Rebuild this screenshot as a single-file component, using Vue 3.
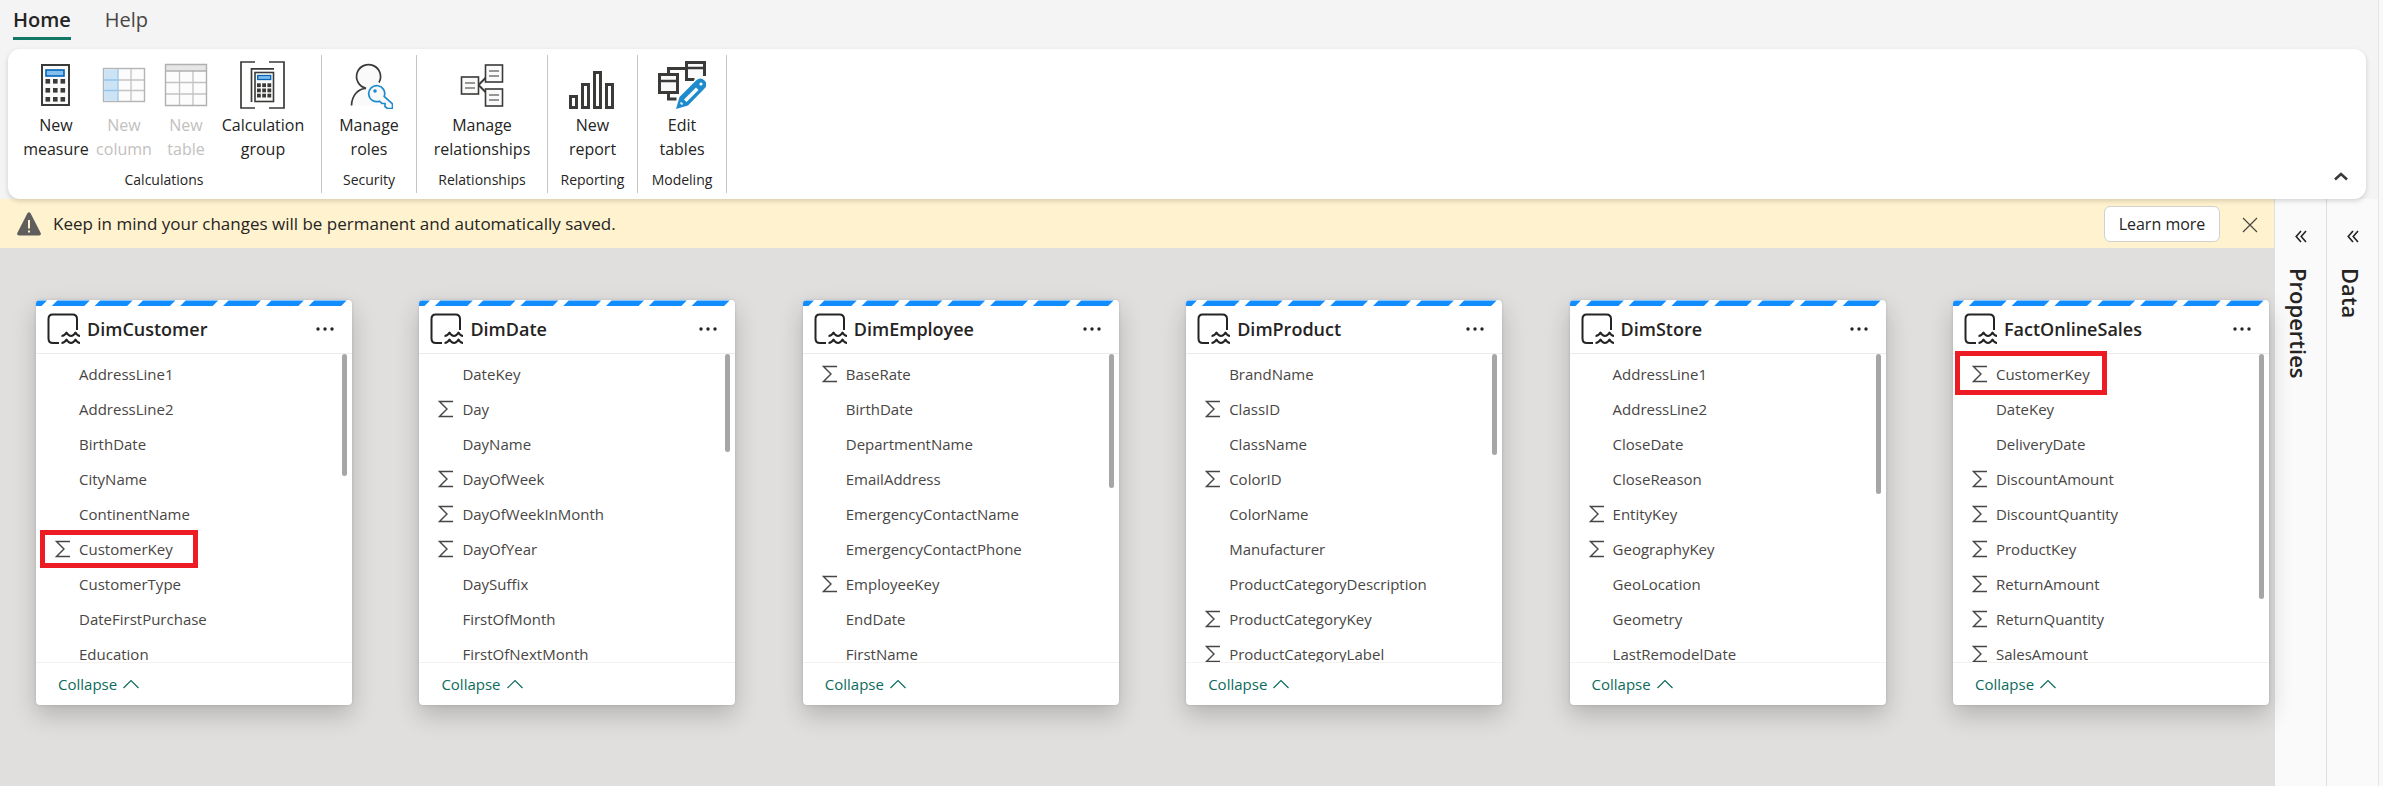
<script setup>
const groups = [
  {
    name: 'Calculations',
    kind: 'calculations',
    actions: [
      { icon: 'measure', lines: ['New', 'measure'] },
      { icon: 'column', lines: ['New', 'column'], disabled: true },
      { icon: 'table', lines: ['New', 'table'], disabled: true },
      { icon: 'calcgroup', lines: ['Calculation', 'group'] },
    ],
  },
  { name: 'Security', kind: 'security', actions: [{ icon: 'roles', lines: ['Manage', 'roles'] }] },
  { name: 'Relationships', kind: 'relationships', actions: [{ icon: 'relations', lines: ['Manage', 'relationships'] }] },
  { name: 'Reporting', kind: 'reporting', actions: [{ icon: 'report', lines: ['New', 'report'] }] },
  { name: 'Modeling', kind: 'modeling', actions: [{ icon: 'edit', lines: ['Edit', 'tables'] }] },
]

// A leading "+" marks a field that is summarised.
const f = (text) =>
  text.split(' ').map((t) => ({ name: t.replace('+', ''), sum: t.startsWith('+') }))

const tables = [
  {
    name: 'DimCustomer',
    thumb: 122,
    mark: 'mark-sixth',
    fields: f('AddressLine1 AddressLine2 BirthDate CityName ContinentName +CustomerKey CustomerType DateFirstPurchase Education'),
  },
  {
    name: 'DimDate',
    thumb: 98,
    fields: f('DateKey +Day DayName +DayOfWeek +DayOfWeekInMonth +DayOfYear DaySuffix FirstOfMonth FirstOfNextMonth'),
  },
  {
    name: 'DimEmployee',
    thumb: 134,
    fields: f('+BaseRate BirthDate DepartmentName EmailAddress EmergencyContactName EmergencyContactPhone +EmployeeKey EndDate FirstName'),
  },
  {
    name: 'DimProduct',
    thumb: 101,
    fields: f('BrandName +ClassID ClassName +ColorID ColorName Manufacturer ProductCategoryDescription +ProductCategoryKey +ProductCategoryLabel'),
  },
  {
    name: 'DimStore',
    thumb: 140,
    fields: f('AddressLine1 AddressLine2 CloseDate CloseReason +EntityKey +GeographyKey GeoLocation Geometry LastRemodelDate'),
  },
  {
    name: 'FactOnlineSales',
    thumb: 245,
    mark: 'mark-first',
    fields: f('+CustomerKey DateKey DeliveryDate +DiscountAmount +DiscountQuantity +ProductKey +ReturnAmount +ReturnQuantity +SalesAmount'),
  },
]

const panes = ['Properties', 'Data']
const keypad = [0, 1, 2]

// Slanted dashes along the top edge of a card; the first is cut by the edge.
const dashes = Array.from({ length: 8 }, (_, i) => {
  const x = -21.5 + i * 42.8
  return `${x},.5 ${x + 32.5},.5 ${x + 27},6 ${x - 5.5},6`
})
</script>

<template>
  <div class="app">
    <nav class="tabs">
      <button type="button" class="tab active">Home</button>
      <button type="button" class="tab">Help</button>
    </nav>

    <header class="ribbon">
      <section v-for="g in groups" :key="g.name" class="group" :class="g.kind">
        <div class="actions">
          <button v-for="a in g.actions" :key="a.icon" type="button" class="action" :class="a.icon" :disabled="a.disabled">
            <svg v-if="a.icon === 'measure'" class="icon" viewBox="0 0 48 48">
              <rect x="10" y="4" width="27" height="40" fill="#fafafa" stroke="#3a3a38" stroke-width="2" />
              <rect x="14" y="9" width="18" height="6" fill="#83beec" stroke="#0364b8" stroke-width="1.6" />
              <template v-for="r in keypad" :key="r">
                <rect v-for="c in keypad" :key="c" :x="13.5 + c * 7.5" :y="18 + r * 9" width="4.6" height="4.6" fill="#3a3a38" />
              </template>
            </svg>
            <svg v-else-if="a.icon === 'column'" class="icon" viewBox="0 0 48 48">
              <rect x="3.5" y="7.5" width="41" height="33" fill="#fcfcfc" stroke="#b4b4b4" stroke-width="1.4" />
              <rect x="4.2" y="8.2" width="13.5" height="31.6" fill="#cce3f6" />
              <path d="M31 8v32M18 19H44M18 29.5H44" stroke="#c2c2c2" stroke-width="1.3" />
              <path d="M18 8v32M4 19H18M4 29.5H18" stroke="#95c5e9" stroke-width="1.3" />
            </svg>
            <svg v-else-if="a.icon === 'table'" class="icon" viewBox="0 0 48 48">
              <rect x="3.5" y="3.5" width="41" height="41" fill="#fcfcfc" />
              <rect x="3.5" y="3.5" width="41" height="6.5" fill="#e6e6e6" />
              <path d="M17.5 10v34M31 10v34M4 21.5H44M4 33H44" stroke="#c2c2c2" stroke-width="1.3" />
              <path d="M3.5 3.5h41v41h-41zM3.5 10h41" fill="none" stroke="#b0b0b0" stroke-width="1.4" />
            </svg>
            <svg v-else-if="a.icon === 'calcgroup'" class="icon" viewBox="0 0 48 48">
              <path d="M16 1H2v46h14M30 1h15v46H30" fill="none" stroke="#3a3a38" stroke-width="1.7" />
              <path d="M12.5 41V7.8H35" fill="none" stroke="#3a3a38" stroke-width="1.7" />
              <rect x="16" y="11.5" width="18.5" height="29" fill="#fafafa" stroke="#3a3a38" stroke-width="1.6" />
              <rect x="18.7" y="14.5" width="13" height="4" fill="#83beec" stroke="#0364b8" stroke-width="1.3" />
              <template v-for="r in keypad" :key="r">
                <rect v-for="c in keypad" :key="c" :x="18 + c * 5.2" :y="22.3 + r * 5.2" width="3.8" height="3.8" fill="#3a3a38" />
              </template>
            </svg>
            <svg v-else-if="a.icon === 'roles'" class="icon" viewBox="0 0 48 48">
              <path d="M6.5 44.5C7 35 13 27.5 22 27.5l18 17z" fill="#fafafa" />
              <circle cx="24" cy="15.5" r="12" fill="#fafafa" />
              <path d="M34 21.5A12 12 0 1 0 21 27.3C13 27.5 6.8 34.5 6.5 44.5" fill="none" stroke="#3a3a38" stroke-width="1.7" />
              <path d="M39.2 35.5a8 8 0 1 0-4.8 4.7l2.6 2.3h3v3l2.5 2h5v-4.6z" fill="#fafafa" stroke="#1e8bcd" stroke-width="1.7" />
              <circle cx="30" cy="30" r="1.8" fill="#1e8bcd" />
            </svg>
            <svg v-else-if="a.icon === 'relations'" class="icon" viewBox="0 0 48 48">
              <path d="M20.5 24l8-8M20.5 24l8 8" stroke="#3a3a38" stroke-width="2" />
              <g fill="#fafafa" stroke="#3a3a38" stroke-width="1.6">
                <rect x="3.5" y="16" width="17" height="17" />
                <rect x="27.5" y="4" width="17" height="17" />
                <rect x="27.5" y="28" width="17" height="17" />
              </g>
              <path d="M7 22h10M7 27h10M31 10h10M31 15h10M31 34h10M31 39h10" stroke="#797774" stroke-width="1.3" />
            </svg>
            <svg v-else-if="a.icon === 'report'" class="icon" viewBox="0 0 48 48">
              <path d="M1.5 35.5h6v11h-6zM13.5 23.5h6v23h-6zM25.5 11.5h6v35h-6zM37.5 23.5h6v23h-6z" fill="#fff" stroke="#3a3a38" stroke-width="3" />
            </svg>
            <svg v-else class="icon" viewBox="0 0 48 48">
              <path d="M10.5 13V7.5H28M10.5 33v5h8" fill="none" stroke="#3a3a38" stroke-width="3" />
              <path d="M1.5 13.5h18v18h-18z" fill="#fafafa" stroke="#3a3a38" stroke-width="3" />
              <path d="M46.5 15V1.5h-18v17h8" fill="#fafafa" stroke="#3a3a38" stroke-width="3" />
              <path d="M1 20h19M28 7h19" stroke="#3a3a38" stroke-width="2.6" />
              <path d="M18 48l3.5-12L38 19.5q4.5-4 8.5 0t0 8L30 44.5z" fill="#1e8bcd" stroke="#fff" stroke-width="3" paint-order="stroke" />
              <path d="M26 38.5L38 26.5l2.5 2.5-12 12z" fill="#fafafa" />
              <circle cx="43" cy="23" r="1.6" fill="#fff" />
              <path d="M22.5 41.5l2 2" stroke="#cfe6f5" stroke-width="2" />
            </svg>
            <span v-for="l in a.lines" :key="l" class="line">{{ l }}</span>
          </button>
        </div>
        <div class="caption">{{ g.name }}</div>
      </section>
      <button type="button" class="fold" aria-label="Collapse ribbon">
        <svg width="14" height="9" viewBox="0 0 14 9"><path d="M1 7.5l6-5.5 6 5.5" fill="none" stroke="#3a3a38" stroke-width="2.6" /></svg>
      </button>
    </header>

    <div class="body">
      <main class="main">
        <div class="banner" role="status">
          <svg class="warn" width="24" height="24" viewBox="0 0 24 24">
            <path d="M10.3 1.5q1.7-2.5 3.4 0L23.7 21q.8 2.5-1.7 2.5H2Q-.5 23.5.3 21z" fill="#605e5c" />
            <path d="M12 8v8.5M12 18.5v2" stroke="#fff2ce" stroke-width="2" />
          </svg>
          <p class="message">Keep in mind your changes will be permanent and automatically saved.</p>
          <button type="button" class="learn">Learn more</button>
          <button type="button" class="close" aria-label="Close">
            <svg width="16" height="16" viewBox="0 0 16 16"><path d="M1 1l14 14M15 1L1 15" stroke="#484644" stroke-width="1.2" /></svg>
          </button>
        </div>

        <div class="canvas">
          <article v-for="t in tables" :key="t.name" class="card">
            <svg class="stripes" viewBox="0 0 316 6">
              <polygon v-for="d in dashes" :key="d" :points="d" fill="#118dff" />
            </svg>
            <div class="head">
              <svg class="store" width="34" height="32" viewBox="0 0 34 32">
                <g fill="none" stroke="#252423" stroke-width="2" stroke-linejoin="round">
                  <path d="M30 17V6q0-4.5-4.5-4.5h-20Q1.5 1.5 1.5 6v19.5Q1.5 30 6 30h6" />
                  <path d="M14.5 23q3 0 5-3.5 2 3.5 4.5 3.5t4.5-3.5q2 3.5 4.5 3.5M14.5 30q3 0 5-3.5 2 3.5 4.5 3.5t4.5-3.5q2 3.5 4.5 3.5" />
                </g>
              </svg>
              <h2 class="title">{{ t.name }}</h2>
              <button type="button" class="more" aria-label="More options">
                <svg width="18" height="4" viewBox="0 0 18 4" fill="#252423"><circle cx="2" cy="2" r="1.7" /><circle cx="9" cy="2" r="1.7" /><circle cx="16" cy="2" r="1.7" /></svg>
              </button>
            </div>
            <div class="fields">
              <ul class="list">
                <li v-for="x in t.fields" :key="x.name" class="field">
                  <span class="sigma">
                    <svg v-if="x.sum" width="16" height="18" viewBox="0 0 16 18"><path d="M15 1.5H1.5L9 9l-7.5 7.5H15" fill="none" stroke="#484644" stroke-width="1.4" /></svg>
                  </span>
                  <span>{{ x.name }}</span>
                </li>
              </ul>
              <div class="thumb" :style="{ height: t.thumb + 'px' }"></div>
            </div>
            <div class="foot">
              <button type="button" class="collapse">
                Collapse
                <svg width="16" height="10" viewBox="0 0 16 10"><path d="M.5 9L8 1.5 15.5 9" fill="none" stroke="#0d6b5b" stroke-width="1.2" /></svg>
              </button>
            </div>
            <div v-if="t.mark" class="mark" :class="t.mark"></div>
          </article>
        </div>
      </main>

      <aside v-for="p in panes" :key="p" class="pane">
        <button type="button" class="expand" :aria-label="'Expand ' + p">
          <svg width="12" height="13" viewBox="0 0 12 13"><path d="M6 1L1.2 6.5 6 12M11 1L6.2 6.5 11 12" fill="none" stroke="#252423" stroke-width="1.6" /></svg>
        </button>
        <h2 class="pane-name">{{ p }}</h2>
      </aside>
    </div>
  </div>
</template>

<style>
body {
  margin: 0;
  background: #f8f8f8;
}
</style>

<style scoped>
.app {
  box-sizing: border-box;
  display: flex;
  flex-direction: column;
  min-height: 100vh;
  margin-right: 4px;
  border-right: 1px solid #e6e6e6;
  background: #f4f4f4;
  color: #252423;
  font-family: "Open Sans", "Noto Sans", sans-serif;
  font-size: 16px;
}
button {
  margin: 0;
  padding: 0;
  border: 0;
  background: none;
  color: inherit;
  font: inherit;
  cursor: pointer;
}
h2,
p,
ul {
  margin: 0;
  padding: 0;
}
svg {
  display: block;
  flex: none;
}
.tabs {
  display: flex;
  gap: 34px;
  height: 49px;
  padding-left: 13px;
}
.tab {
  height: 40px;
  border-bottom: 3px solid transparent;
  box-sizing: border-box;
  font-size: 20px;
  line-height: 39px;
  color: #484644;
}
.tab.active {
  border-bottom-color: #117865;
  font-weight: 600;
  color: #252423;
}
.ribbon {
  position: relative;
  z-index: 1;
  display: flex;
  box-sizing: border-box;
  height: 150px;
  margin: 0 12px 0 8px;
  padding: 6px 0;
  border-radius: 12px;
  background: #fff;
  box-shadow: 0 2px 5px rgba(0, 0, 0, 0.16);
}
.group {
  box-sizing: border-box;
  border-right: 1px solid #c8c6c4;
  padding-top: 6px;
}
.calculations {
  padding-left: 11px;
  padding-right: 12px;
}
.security { width: 95px; }
.relationships { width: 131px; }
.reporting { width: 90px; }
.modeling { width: 89px; }
.actions {
  display: flex;
  justify-content: center;
}
.action {
  display: flex;
  flex-direction: column;
  align-items: center;
  line-height: 24px;
}
.action:disabled {
  color: #c2c0be;
}
.measure { width: 74px; }
.column,
.table { width: 62px; }
.calcgroup { width: 92px; }
.icon {
  width: 48px;
  height: 48px;
  margin-bottom: 4px;
}
.caption {
  margin-top: 9px;
  font-size: 14px;
  line-height: 20px;
  text-align: center;
}
.fold {
  align-self: flex-end;
  margin: 0 14px 8px auto;
  padding: 4px;
}
.body {
  display: flex;
  flex: 1;
}
.main {
  display: flex;
  flex: 1;
  flex-direction: column;
  min-width: 0;
  background: #e1dfdd;
}
.banner {
  display: flex;
  align-items: center;
  height: 49px;
  padding: 0 16px 0 17px;
  background: #fff2ce;
}
.message {
  flex: 1;
  margin-left: 12px;
  font-size: 17px;
}
.learn {
  box-sizing: border-box;
  height: 36px;
  width: 116px;
  margin-right: 22px;
  border: 1px solid #d1d1d1;
  border-radius: 6px;
  background: #fff;
}
.close {
  padding: 2px 0 0;
}
.canvas {
  display: flex;
  flex: 1;
  align-items: flex-start;
  justify-content: space-between;
  padding: 52px 5px 40px 36px;
}
.card {
  position: relative;
  width: 316px;
  border-radius: 4px;
  background: #fff;
  box-shadow: 0 10px 24px rgba(0, 0, 0, 0.2), 0 0 3px rgba(0, 0, 0, 0.14);
}
.stripes {
  width: 100%;
  height: 6px;
  border-radius: 4px 4px 0 0;
}
.head {
  display: flex;
  align-items: center;
  box-sizing: border-box;
  height: 48px;
  padding: 0 18px 2px 11px;
  border-bottom: 1px solid #edebe9;
}
.title {
  flex: 1;
  margin-left: 6px;
  font-size: 18px;
  font-weight: 600;
  line-height: 24px;
}
.fields {
  position: relative;
  height: 308px;
  overflow: hidden;
  border-bottom: 1px solid #f3f2f1;
}
.list {
  padding-top: 2px;
  list-style: none;
}
.field {
  display: flex;
  align-items: center;
  height: 35px;
  padding-left: 19px;
  font-size: 15px;
  color: #484644;
}
.sigma {
  width: 24px;
}
.thumb {
  position: absolute;
  top: 0;
  right: 5px;
  width: 5px;
  border-radius: 3px;
  background: #a6a6a6;
}
.foot {
  display: flex;
  align-items: center;
  height: 42px;
  padding-left: 22px;
}
.collapse {
  display: flex;
  align-items: center;
  gap: 6px;
  font-size: 15px;
  color: #0d6b5b;
}
.mark {
  position: absolute;
  box-sizing: border-box;
  border: 5px solid #ed1c24;
}
.mark-sixth {
  top: 230px;
  left: 4px;
  width: 158px;
  height: 38px;
}
.mark-first {
  top: 51px;
  left: 2px;
  width: 152px;
  height: 44px;
}
.pane {
  display: flex;
  flex-direction: column;
  align-items: center;
  box-sizing: border-box;
  width: 52px;
  border-left: 1px solid #e1dfdd;
  background: #fafafa;
}
.expand {
  margin-top: 31px;
}
.pane-name {
  margin-top: 25px;
  margin-right: 4px;
  font-size: 22px;
  font-weight: 600;
  line-height: 28px;
  writing-mode: vertical-rl;
}
</style>
